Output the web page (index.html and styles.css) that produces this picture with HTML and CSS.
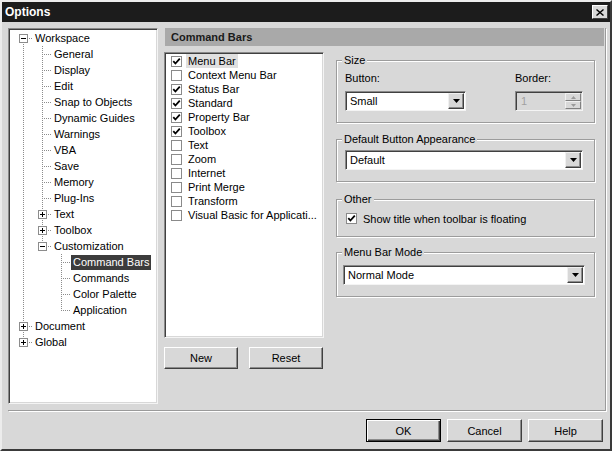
FILE: index.html
```html
<!DOCTYPE html>
<html>
<head>
<meta charset="utf-8">
<title>Options</title>
<link rel="stylesheet" href="styles.css">
</head>
<body>
<div class="window">
  <div class="titlebar">
    <span class="title">Options</span>
    <span class="close"><svg width="8" height="7" viewBox="0 0 8 7"><path d="M0.5 0.5L7.5 6.5M7.5 0.5L0.5 6.5" stroke="#000" stroke-width="1.4" fill="none"/></svg></span>
  </div>
  <div class="client">
    <div class="main">
      <div class="tree">
        <div class="trow"><span class="c f"><span class="exp minus"></span></span><span class="lbl">Workspace</span></div>
        <div class="trow"><span class="c v"></span><span class="c t"></span><span class="lbl">General</span></div>
        <div class="trow"><span class="c v"></span><span class="c t"></span><span class="lbl">Display</span></div>
        <div class="trow"><span class="c v"></span><span class="c t"></span><span class="lbl">Edit</span></div>
        <div class="trow"><span class="c v"></span><span class="c t"></span><span class="lbl">Snap to Objects</span></div>
        <div class="trow"><span class="c v"></span><span class="c t"></span><span class="lbl">Dynamic Guides</span></div>
        <div class="trow"><span class="c v"></span><span class="c t"></span><span class="lbl">Warnings</span></div>
        <div class="trow"><span class="c v"></span><span class="c t"></span><span class="lbl">VBA</span></div>
        <div class="trow"><span class="c v"></span><span class="c t"></span><span class="lbl">Save</span></div>
        <div class="trow"><span class="c v"></span><span class="c t"></span><span class="lbl">Memory</span></div>
        <div class="trow"><span class="c v"></span><span class="c t"></span><span class="lbl">Plug-Ins</span></div>
        <div class="trow"><span class="c v"></span><span class="c t"><span class="exp plus"></span></span><span class="lbl">Text</span></div>
        <div class="trow"><span class="c v"></span><span class="c t"><span class="exp plus"></span></span><span class="lbl">Toolbox</span></div>
        <div class="trow"><span class="c v"></span><span class="c l"><span class="exp minus"></span></span><span class="lbl">Customization</span></div>
        <div class="trow"><span class="c v"></span><span class="c"></span><span class="c t"></span><span class="lbl sel">Command Bars</span></div>
        <div class="trow"><span class="c v"></span><span class="c"></span><span class="c t"></span><span class="lbl">Commands</span></div>
        <div class="trow"><span class="c v"></span><span class="c"></span><span class="c t"></span><span class="lbl">Color Palette</span></div>
        <div class="trow"><span class="c v"></span><span class="c"></span><span class="c l"></span><span class="lbl">Application</span></div>
        <div class="trow"><span class="c t"><span class="exp plus"></span></span><span class="lbl">Document</span></div>
        <div class="trow"><span class="c l"><span class="exp plus"></span></span><span class="lbl">Global</span></div>
      </div>
      <div class="panel">
        <div class="panel-head">Command Bars</div>
        <div class="panel-body">
          <div class="col-left">
            <div class="list">
              <div class="lrow"><span class="cb on"><svg width="9" height="9" viewBox="0 0 9 9"><path d="M1.3 4.2L3.4 6.5L7.8 1.6" stroke="#000" stroke-width="1.8" fill="none"/></svg></span><span class="ltext hl">Menu Bar</span></div>
              <div class="lrow"><span class="cb"></span><span class="ltext">Context Menu Bar</span></div>
              <div class="lrow"><span class="cb on"><svg width="9" height="9" viewBox="0 0 9 9"><path d="M1.3 4.2L3.4 6.5L7.8 1.6" stroke="#000" stroke-width="1.8" fill="none"/></svg></span><span class="ltext">Status Bar</span></div>
              <div class="lrow"><span class="cb on"><svg width="9" height="9" viewBox="0 0 9 9"><path d="M1.3 4.2L3.4 6.5L7.8 1.6" stroke="#000" stroke-width="1.8" fill="none"/></svg></span><span class="ltext">Standard</span></div>
              <div class="lrow"><span class="cb on"><svg width="9" height="9" viewBox="0 0 9 9"><path d="M1.3 4.2L3.4 6.5L7.8 1.6" stroke="#000" stroke-width="1.8" fill="none"/></svg></span><span class="ltext">Property Bar</span></div>
              <div class="lrow"><span class="cb on"><svg width="9" height="9" viewBox="0 0 9 9"><path d="M1.3 4.2L3.4 6.5L7.8 1.6" stroke="#000" stroke-width="1.8" fill="none"/></svg></span><span class="ltext">Toolbox</span></div>
              <div class="lrow"><span class="cb"></span><span class="ltext">Text</span></div>
              <div class="lrow"><span class="cb"></span><span class="ltext">Zoom</span></div>
              <div class="lrow"><span class="cb"></span><span class="ltext">Internet</span></div>
              <div class="lrow"><span class="cb"></span><span class="ltext">Print Merge</span></div>
              <div class="lrow"><span class="cb"></span><span class="ltext">Transform</span></div>
              <div class="lrow"><span class="cb"></span><span class="ltext">Visual Basic for Applicati...</span></div>
            </div>
            <div class="list-buttons">
              <button class="btn">New</button>
              <button class="btn">Reset</button>
            </div>
          </div>
          <div class="col-right">
            <div class="group g-size">
              <div class="legend">Size</div>
              <div class="size-grid">
                <span>Button:</span>
                <span>Border:</span>
                <div class="combo"><span class="combo-text">Small</span><span class="combo-btn"><svg width="7" height="4" viewBox="0 0 7 4"><path d="M0 0H7L3.5 4Z" fill="#000"/></svg></span></div>
                <div class="spin"><span class="spin-text">1</span><span class="spin-btns"><span class="sb"><svg width="5" height="3" viewBox="0 0 5 3"><path d="M0 3H5L2.5 0Z" fill="#9a9a9a"/></svg></span><span class="sb"><svg width="5" height="3" viewBox="0 0 5 3"><path d="M0 0H5L2.5 3Z" fill="#9a9a9a"/></svg></span></span></div>
              </div>
            </div>
            <div class="group g-dba">
              <div class="legend">Default Button Appearance</div>
              <div class="combo w-dba"><span class="combo-text">Default</span><span class="combo-btn"><svg width="7" height="4" viewBox="0 0 7 4"><path d="M0 0H7L3.5 4Z" fill="#000"/></svg></span></div>
            </div>
            <div class="group g-other">
              <div class="legend">Other</div>
              <div class="check-row"><span class="cb on"><svg width="9" height="9" viewBox="0 0 9 9"><path d="M1.3 4.2L3.4 6.5L7.8 1.6" stroke="#000" stroke-width="1.8" fill="none"/></svg></span><span>Show title when toolbar is floating</span></div>
            </div>
            <div class="group g-mbm">
              <div class="legend">Menu Bar Mode</div>
              <div class="combo w-mbm"><span class="combo-text">Normal Mode</span><span class="combo-btn"><svg width="7" height="4" viewBox="0 0 7 4"><path d="M0 0H7L3.5 4Z" fill="#000"/></svg></span></div>
            </div>
          </div>
        </div>
      </div>
    </div>
    <div class="footer">
      <button class="btn wide default">OK</button>
      <button class="btn wide">Cancel</button>
      <button class="btn wide">Help</button>
    </div>
  </div>
</div>
</body>
</html>
```
FILE: styles.css
```css
* { box-sizing: border-box; }

body {
  margin: 0;
  font: 11px "Liberation Sans", Arial, sans-serif;
  color: #000;
  background: #d8d8d8;
}

.window {
  width: 612px;
  height: 451px;
  background: #d8d8d8;
  border: 2px solid;
  border-color: #ececec #3a3a3a #3a3a3a #ececec;
  display: flex;
  flex-direction: column;
}

.titlebar {
  height: 20px;
  flex: none;
  background: #1c1c1c;
  display: flex;
  align-items: center;
  justify-content: space-between;
  padding: 0 2px 0 3px;
}

.title {
  color: #fff;
  font-weight: bold;
  font-size: 12px;
}

.close {
  width: 16px;
  height: 14px;
  background: #d8d8d8;
  border: 1px solid;
  border-color: #fff #404040 #404040 #fff;
  display: flex;
  align-items: center;
  justify-content: center;
}

.client {
  flex: 1;
  padding: 6px 4px 0 6px;
  display: flex;
  flex-direction: column;
}

.main {
  display: flex;
  gap: 6px;
  padding: 0 1px 6px 0;
  border-right: 1px solid #9a9a9a;
  border-bottom: 1px solid #9a9a9a;
  box-shadow: 1px 1px 0 #fff;
}

/* sunken white boxes */
.tree, .list {
  background: #fff;
  border: 1px solid;
  border-color: #8a8a8a #f4f4f4 #f4f4f4 #8a8a8a;
  box-shadow: inset 1px 1px 0 #404040, inset -1px -1px 0 #d8d8d8;
}

.tree {
  width: 150px;
  height: 376px;
  flex: none;
  padding: 1px 0 0 5px;
}

.trow {
  height: 16px;
  display: flex;
  align-items: center;
}

.c {
  width: 19px;
  height: 16px;
  flex: none;
  display: flex;
  justify-content: center;
  align-items: flex-start;
  background-repeat: no-repeat;
  --vd: repeating-linear-gradient(#8c8c8c 0 1px, transparent 1px 2px);
  --hd: repeating-linear-gradient(90deg, #8c8c8c 0 1px, transparent 1px 2px);
}

.c.v {
  background-image: var(--vd);
  background-size: 1px 16px;
  background-position: 9px 0;
}

.c.t {
  background-image: var(--vd), var(--hd);
  background-size: 1px 16px, 10px 1px;
  background-position: 9px 0, 9px 8px;
}

.c.l {
  background-image: var(--vd), var(--hd);
  background-size: 1px 8px, 10px 1px;
  background-position: 9px 0, 9px 8px;
}

.c.f {
  background-image: var(--vd), var(--hd);
  background-size: 1px 8px, 10px 1px;
  background-position: 9px 8px, 9px 8px;
}

.exp {
  width: 9px;
  height: 9px;
  margin-top: 4px;
  border: 1px solid #8c8c8c;
  background: linear-gradient(#000, #000) center / 5px 1px no-repeat, #fff;
}

.exp.plus {
  background:
    linear-gradient(#000, #000) center / 5px 1px no-repeat,
    linear-gradient(#000, #000) center / 1px 5px no-repeat,
    #fff;
}

.lbl {
  padding: 0 2px;
  line-height: 15px;
  white-space: nowrap;
}

.lbl.sel {
  background: #3c3c3c;
  color: #fff;
}

.panel {
  width: 440px;
  flex: none;
  display: flex;
  flex-direction: column;
}

.panel-head {
  height: 18px;
  margin-left: 1px;
  background: #a9a9a9;
  font-weight: bold;
  line-height: 18px;
  padding-left: 6px;
  color: #1a1a1a;
}

.panel-body {
  display: flex;
  gap: 12px;
  margin-top: 6px;
}

.col-left {
  width: 160px;
  flex: none;
  display: flex;
  flex-direction: column;
}

.list {
  height: 286px;
  padding: 1px 0 0 0;
}

.lrow {
  height: 14px;
  display: flex;
  align-items: center;
  padding-left: 6px;
}

.cb {
  width: 11px;
  height: 11px;
  flex: none;
  border: 1px solid #8a8a8a;
  background: #fff;
  display: flex;
  align-items: center;
  justify-content: center;
}

.ltext {
  margin-left: 4px;
  padding: 0 2px;
  line-height: 14px;
  white-space: nowrap;
}

.ltext.hl {
  background: #e0e0e0;
}

.list-buttons {
  display: flex;
  gap: 11px;
  margin-top: 9px;
}

.btn {
  width: 74px;
  height: 22px;
  font: 11px "Liberation Sans", Arial, sans-serif;
  color: #000;
  background: #d8d8d8;
  border: 1px solid;
  border-color: #fff #404040 #404040 #fff;
  box-shadow: inset -1px -1px 0 #8c8c8c;
  padding: 0;
}

.btn.wide {
  width: 75px;
  height: 23px;
}

.btn.default {
  border-color: #000;
  box-shadow: inset 1px 1px 0 #fff, inset -1px -1px 0 #404040, inset -2px -2px 0 #8c8c8c;
}

.col-right {
  width: 259px;
  flex: none;
  display: flex;
  flex-direction: column;
}

.group {
  border: 1px solid #9c9c9c;
  box-shadow: 1px 1px 0 #fff, inset 1px 1px 0 #fff;
  padding: 0 8px 11px 8px;
}

.legend {
  width: max-content;
  margin: -7px 0 0 -3px;
  padding: 0 2px;
  line-height: 13px;
  background: #d8d8d8;
}

.g-size { margin-top: 8px; }
.g-dba { margin-top: 16px; }
.g-other { margin-top: 17px; padding-bottom: 11px; }
.g-mbm { margin-top: 15px; }

.size-grid {
  display: grid;
  grid-template-columns: 121px 68px;
  column-gap: 49px;
  row-gap: 6px;
  margin-top: 5px;
  line-height: 13px;
}

.combo {
  height: 20px;
  display: flex;
  background: #fff;
  border: 1px solid;
  border-color: #8a8a8a #f4f4f4 #f4f4f4 #8a8a8a;
  box-shadow: inset 1px 1px 0 #404040;
  padding: 1px;
}

.g-dba .combo { margin-top: 4px; }
.g-mbm .combo { margin-top: 6px; }

.w-dba { width: 238px; }
.w-mbm { width: 242px; margin-left: -2px; }

.combo-text {
  flex: 1;
  padding-left: 3px;
  line-height: 16px;
  white-space: nowrap;
}

.combo-btn {
  width: 16px;
  flex: none;
  background: #d8d8d8;
  border: 1px solid;
  border-color: #f0f0f0 #404040 #404040 #f0f0f0;
  box-shadow: inset -1px -1px 0 #8c8c8c;
  display: flex;
  align-items: center;
  justify-content: center;
}

.spin {
  height: 20px;
  display: flex;
  background: #d8d8d8;
  border: 1px solid;
  border-color: #8a8a8a #f4f4f4 #f4f4f4 #8a8a8a;
  box-shadow: inset 1px 1px 0 #404040;
  padding: 1px;
}

.spin-text {
  flex: 1;
  color: #a0a0a0;
  padding-left: 4px;
  line-height: 16px;
}

.spin-btns {
  width: 16px;
  flex: none;
  display: flex;
  flex-direction: column;
}

.sb {
  flex: 1;
  background: #d8d8d8;
  border: 1px solid;
  border-color: #f0f0f0 #808080 #808080 #f0f0f0;
  display: flex;
  align-items: center;
  justify-content: center;
}

.check-row {
  display: flex;
  align-items: center;
  gap: 6px;
  height: 13px;
  margin-top: 6px;
  margin-left: 1px;
}

.footer {
  display: flex;
  justify-content: flex-end;
  gap: 6px;
  padding: 8px 3px 0 0;
}
```
